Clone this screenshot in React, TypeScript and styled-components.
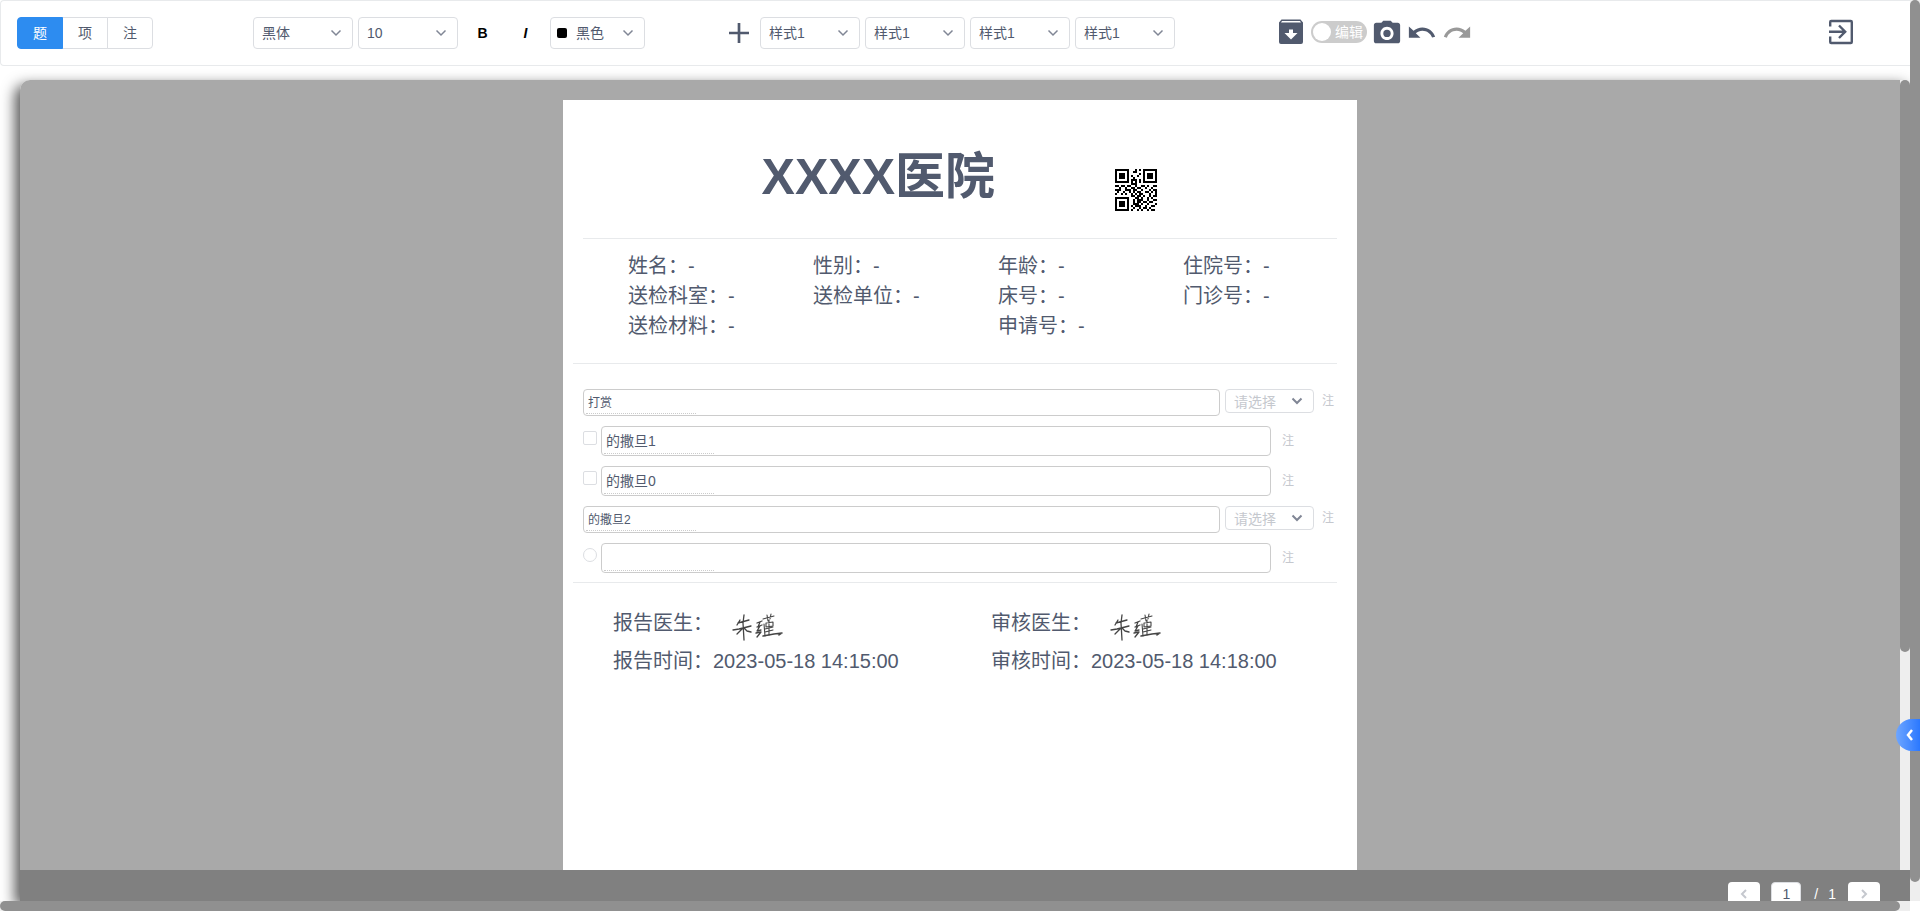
import React from 'react';
import styled, { createGlobalStyle } from 'styled-components';
import { IoMdAdd, IoMdCamera, IoMdUndo, IoMdRedo } from 'react-icons/io';

const ink = '#515a6e';
const line = '#dcdee2';
const divider = '#e8eaec';
const thumb = '#909090';
const muted = '#c5c8ce';

const GlobalStyle = createGlobalStyle`
  * { box-sizing: border-box; }
  body {
    margin: 0;
    background: #fff;
    color: ${ink};
    font: 14px/20px "Liberation Sans", "Noto Sans CJK SC", sans-serif;
  }
  button, input, select { font: inherit; color: inherit; }
`;

const Shell = styled.div`
  display: grid;
  grid-template: minmax(0, 1fr) 10px / minmax(0, 1fr) 10px;
  height: 100vh;
  overflow: hidden;
`;

const Main = styled.main`
  display: flex;
  flex-direction: column;
  min-width: 0;
  overflow: hidden;
`;

const Track = styled.div<{ $across?: boolean; $rest: number }>`
  display: flex;
  flex-direction: ${(p) => (p.$across ? 'row' : 'column')};
  flex: none;
  min-width: 10px;
  background: #eee;
  &::after { content: ''; flex: ${(p) => p.$rest} 0 0; }
`;

const Thumb = styled.div<{ $share: number }>`
  flex: ${(p) => p.$share} 0 0;
  min-width: 10px;
  min-height: 10px;
  border-radius: 5px;
  background: ${thumb};
`;

const Toolbar = styled.header`
  display: flex;
  align-items: center;
  flex: none;
  height: 66px;
  padding: 0 54px 0 16px;
  border: 1px solid ${divider};
  border-right: 0;
  border-radius: 4px 0 0 4px;
`;

const Group = styled.div<{ $gap: number; $before?: number }>`
  display: flex;
  align-items: center;
  gap: ${(p) => p.$gap}px;
  margin-left: ${(p) => p.$before ?? 0}px;
`;

const ActionGroup = styled(Group)`
  padding-bottom: 2px;
`;

const EndGroup = styled(ActionGroup)`
  margin-left: auto;
`;

const Segment = styled.button<{ $active?: boolean }>`
  position: relative;
  z-index: ${(p) => (p.$active ? 1 : 0)};
  width: 46px;
  height: 32px;
  padding: 0;
  margin-left: -1px;
  border: 1px solid ${(p) => (p.$active ? '#2d8cf0' : line)};
  background: ${(p) => (p.$active ? '#2d8cf0' : '#fff')};
  color: ${(p) => (p.$active ? '#fff' : ink)};
  &:first-child { margin-left: 0; border-radius: 4px 0 0 4px; }
  &:last-child { border-radius: 0 4px 4px 0; }
`;

const SelectBox = styled.div<{ $width: number; $height?: number }>`
  position: relative;
  flex: none;
  width: ${(p) => p.$width}px;
  height: ${(p) => p.$height ?? 32}px;
  > svg {
    position: absolute;
    right: 9px;
    top: 50%;
    margin-top: -8px;
    pointer-events: none;
    color: #808695;
  }
`;

const NativeSelect = styled.select<{ $inset?: number; $muted?: boolean }>`
  appearance: none;
  width: 100%;
  height: 100%;
  padding: ${(p) => (p.$muted ? 2 : 0)}px 24px 0 ${(p) => p.$inset ?? 8}px;
  border: 1px solid ${line};
  border-radius: 4px;
  background: #fff;
  color: ${(p) => (p.$muted ? muted : ink)};
  font-size: 14px;
`;

const Swatch = styled.span`
  position: absolute;
  left: 7px;
  top: 11px;
  width: 10px;
  height: 10px;
  border-radius: 2px;
  background: #000;
`;

const StyleButton = styled.button<{ $italic?: boolean }>`
  width: 43px;
  height: 32px;
  padding: 0;
  border: 0;
  background: none;
  color: #000;
  font-weight: 700;
  font-style: ${(p) => (p.$italic ? 'italic' : 'normal')};
`;

const IconButton = styled.button<{ $faded?: boolean }>`
  display: flex;
  padding: 0;
  border: 0;
  background: none;
  color: ${(p) => (p.$faded ? '#999' : ink)};
`;

const Switch = styled.label`
  display: flex;
  align-items: center;
  gap: 4px;
  width: 56px;
  height: 22px;
  padding: 2px;
  border-radius: 11px;
  background: #ccc;
  color: #fff;
  input {
    appearance: none;
    width: 18px;
    height: 18px;
    margin: 0;
    border-radius: 50%;
    background: #fff;
  }
`;

const Editor = styled.section`
  display: flex;
  flex-direction: column;
  flex: 1;
  min-height: 0;
  margin: 14px 0 0 20px;
  border-radius: 10px 0 0 0;
  box-shadow: -5px 5px 14px #555;
`;

const Workspace = styled.div`
  display: flex;
  flex: 1;
  min-height: 0;
`;

const Desk = styled.div`
  display: flex;
  justify-content: center;
  flex: 1;
  min-width: 0;
  padding-top: 20px;
  border-radius: 10px 0 0 0;
  background: #a9a9a9;
  overflow: hidden;
`;

const Paper = styled.article`
  flex: none;
  width: 794px;
  padding: 50px 20px 0;
  background: #fff;
`;

const PaperHead = styled.header`
  display: flex;
  align-items: flex-start;
  justify-content: flex-end;
  gap: 120px;
  height: 89px;
  padding-right: 180px;
  border-bottom: 1px solid ${divider};
  > svg { margin-top: 19px; }
`;

const Title = styled.h1`
  margin: 0;
  font-size: 50px;
  line-height: 54px;
`;

const Patient = styled.dl`
  display: grid;
  grid-template-columns: repeat(4, 185px);
  grid-auto-rows: 30px;
  height: 125px;
  margin: 0 0 0 -10px;
  padding: 12px 0 0 55px;
  border-bottom: 1px solid ${divider};
  font-size: 20px;
  line-height: 30px;
  dt, dd { margin: 0; }
`;

const Cell = styled.div<{ $row: number; $col: number }>`
  display: flex;
  grid-area: ${(p) => p.$row} / ${(p) => p.$col};
`;

const Questions = styled.form`
  display: flex;
  flex-direction: column;
  gap: 10px;
  margin-left: -10px;
  padding: 25px 0 9px 10px;
  border-bottom: 1px solid ${divider};
`;

const Note = styled.button`
  width: 15px;
  padding: 0;
  border: 0;
  background: none;
  color: ${muted};
  font-size: 12px;
  text-align: right;
`;

const QuestionRow = styled.div<{ $option?: boolean }>`
  display: flex;
  align-items: flex-start;
  gap: ${(p) => (p.$option ? 4 : 5)}px;
  padding-right: ${(p) => (p.$option ? 43 : 3)}px;
  font-size: ${(p) => (p.$option ? 14 : 12)}px;
  > ${Note} {
    height: ${(p) => (p.$option ? 30 : 24)}px;
    margin-left: ${(p) => (p.$option ? 4 : 0)}px;
  }
`;

const Frame = styled.div<{ $height: number }>`
  flex: 1;
  height: ${(p) => p.$height}px;
  padding: 2px 2px 1px;
  border: 1px solid #ccc;
  border-radius: 4px;
  input {
    display: block;
    width: 110px;
    height: 100%;
    padding: 0 2px 3px;
    border: 0;
    border-bottom: 1px dotted #ccc;
    background: none;
    outline: 0;
  }
`;

const Tick = styled.input`
  appearance: none;
  width: 14px;
  height: 14px;
  margin: 5px 0 0;
  border: 1px solid ${line};
  border-radius: ${(p) => (p.type === 'radio' ? '50%' : '2px')};
`;

const Signoff = styled.dl`
  display: grid;
  grid-template-columns: repeat(2, 378px);
  grid-auto-rows: 38px;
  margin: 21px 0 0;
  padding-left: 30px;
  font-size: 20px;
  line-height: 38px;
  > div { display: flex; }
  dt, dd { margin: 0; }
  svg { display: block; margin: 9px 0 0 19px; }
`;

const Pager = styled.footer`
  display: flex;
  justify-content: flex-end;
  flex: none;
  height: 31px;
  padding: 12px 30px 0 0;
  background: #808080;
  color: #fff;
  line-height: 24px;
  overflow: hidden;
`;

const PageButton = styled.button`
  display: flex;
  align-items: center;
  justify-content: center;
  width: 32px;
  height: 24px;
  padding: 0;
  border: 0;
  border-radius: 4px;
  background: #fff;
  color: ${muted};
`;

const PageInput = styled.input`
  width: 30px;
  height: 24px;
  margin: 0 13px 0 11px;
  padding: 0;
  border: 1px solid ${line};
  border-radius: 4px;
  color: ${ink};
  text-align: center;
`;

const PageTotal = styled.span`
  display: flex;
  gap: 10px;
  margin-right: 12px;
`;

const DrawerTab = styled.button`
  position: fixed;
  right: 0;
  bottom: 160px;
  display: flex;
  align-items: center;
  justify-content: flex-end;
  width: 24px;
  height: 32px;
  padding: 0 2px 0 0;
  border: 0;
  border-radius: 16px 0 0 16px;
  background: linear-gradient(90deg, #6ea6ff, #2b78ff);
  color: #fff;
`;

function Chevron({ bold }: { bold?: boolean }) {
  return (
    <svg width="16" height="16" viewBox="0 0 16 16" fill="none" stroke="currentColor" strokeWidth={bold ? 2 : 1.5}>
      <path d="M3.5 5.5 8 10l4.5-4.5" />
    </svg>
  );
}

function Arrow({ back, tall }: { back?: boolean; tall?: boolean }) {
  const reach = tall ? 5 : 4;
  const tip = back ? 6 : 10;
  const tail = back ? 10 : 6;
  return (
    <svg width="16" height="16" viewBox="0 0 16 16" fill="none" stroke="currentColor" strokeWidth={tall ? 2.5 : 2}>
      <path d={`M${tail} ${8 - reach}L${tip} 8l${tail - tip} ${reach}`} />
    </svg>
  );
}

function ArchiveIcon() {
  return (
    <svg width="30" height="30" viewBox="0 0 30 30" fill="currentColor">
      <path
        fillRule="evenodd"
        d="M5.5 2.5h19L27 5.5V25a2 2 0 0 1-2 2H5a2 2 0 0 1-2-2V5.500zM6 4 5 5.500h20L24 4zM13 12.500v3.500H8.500L15 22.500 21.500 16H17v-3.500z"
      />
    </svg>
  );
}

function ExitIcon() {
  return (
    <svg width="30" height="30" viewBox="0 0 30 30" fill="none" stroke="currentColor" strokeWidth="2.4">
      <path d="M4.200 9.500V5a1 1 0 0 1 1-1h19.600a1 1 0 0 1 1 1v20a1 1 0 0 1-1 1H5.200a1 1 0 0 1-1-1v-5.500" />
      <path d="M3 14.700h15.500M13 8.500l6.200 6.200L13 21" />
    </svg>
  );
}

interface PickerProps {
  label: string;
  value: string;
  width?: number;
  inset?: number;
  children?: React.ReactNode;
}

function Picker({ label, value, width = 100, inset, children }: PickerProps) {
  return (
    <SelectBox $width={width}>
      <NativeSelect aria-label={label} $inset={inset}>
        <option>{value}</option>
      </NativeSelect>
      {children}
      <Chevron />
    </SelectBox>
  );
}

const qrRows = [
  '111111100010101111111',
  '100000100110001000001',
  '101110100000101011101',
  '101110101001001011101',
  '101110100100001011101',
  '100000101110101000001',
  '111111101010101111111',
  '000000001110000000000',
  '110110110010011010011',
  '001001001101100100100',
  '111001110110010001011',
  '010010010101100110101',
  '100101001010110001001',
  '000000001101101001011',
  '111111100011010010100',
  '100000100101110010011',
  '101110100101101101100',
  '101110100111010010001',
  '101110101011100100110',
  '100000100100101101000',
  '111111101001010010110',
];

function QrCode() {
  const path = qrRows
    .map((row, y) => [...row].map((bit, x) => (bit === '1' ? `M${x} ${y}h1v1h-1z` : '')).join(''))
    .join('');
  return (
    <svg width="42" height="42" viewBox="0 0 21 21" shapeRendering="crispEdges" role="img" aria-label="二维码">
      <path d={path} fill="#000" />
    </svg>
  );
}

function Signature() {
  return (
    <svg width="52" height="28" viewBox="0 0 52 28" fill="none" stroke="#444" strokeLinecap="round" strokeLinejoin="round">
      <path strokeWidth="1.3" d="M8 7 5 12M6 10l11-3M1 17l6-1 12-3M12 2l-1 8 1 17M11 15l-6 6M12 15l3 3 4 1" />
      <path strokeWidth="1.3" d="M25 10l5-2M28 9l-2 5M25 14l5-2M28 13l-3 5 4-1M24 20l5-1-4 5" />
      <path strokeWidth="1.1" d="M31 6l11-3M35 2l1 6M39 1l-1 5M34 10l7-1v4l-7 1zM37 7v15M33 16l8-2M33 19l8-2M32 11l1 12" />
      <path strokeWidth="1.5" d="M31 23l11-2 8-1-3 2" />
    </svg>
  );
}

const patient: [string, string, number, number][] = [
  ['姓名：', '-', 1, 1],
  ['性别：', '-', 1, 2],
  ['年龄：', '-', 1, 3],
  ['住院号：', '-', 1, 4],
  ['送检科室：', '-', 2, 1],
  ['送检单位：', '-', 2, 2],
  ['床号：', '-', 2, 3],
  ['门诊号：', '-', 2, 4],
  ['送检材料：', '-', 3, 1],
  ['申请号：', '-', 3, 3],
];

function Question({ text }: { text: string }) {
  return (
    <QuestionRow>
      <Frame $height={27}>
        <input aria-label="题目" defaultValue={text} />
      </Frame>
      <SelectBox $width={89} $height={24}>
        <NativeSelect aria-label="题目选项" $muted>
          <option>请选择</option>
        </NativeSelect>
        <Chevron bold />
      </SelectBox>
      <Note type="button">注</Note>
    </QuestionRow>
  );
}

function Option({ text, kind }: { text: string; kind: 'checkbox' | 'radio' }) {
  return (
    <QuestionRow $option>
      <Tick type={kind} aria-label={text || '选项'} />
      <Frame $height={30}>
        <input aria-label="选项内容" defaultValue={text} />
      </Frame>
      <Note type="button">注</Note>
    </QuestionRow>
  );
}

export default function App() {
  return (
    <>
      <GlobalStyle />
      <Shell>
        <Main>
          <Toolbar>
            <Group $gap={0}>
              <Segment $active>题</Segment>
              <Segment>项</Segment>
              <Segment>注</Segment>
            </Group>
            <Group $gap={5} $before={100}>
              <Picker label="字体" value="黑体" />
              <Picker label="字号" value="10" />
            </Group>
            <Group $gap={0} $before={3}>
              <StyleButton aria-label="加粗">B</StyleButton>
              <StyleButton aria-label="斜体" $italic>I</StyleButton>
            </Group>
            <Group $gap={0} $before={3}>
              <Picker label="颜色" value="黑色" width={95} inset={25}>
                <Swatch />
              </Picker>
            </Group>
            <Group $gap={5} $before={78}>
              <IconButton aria-label="添加"><IoMdAdd size={32} /></IconButton>
              <Picker label="样式一" value="样式1" />
              <Picker label="样式二" value="样式1" />
              <Picker label="样式三" value="样式1" />
              <Picker label="样式四" value="样式1" />
            </Group>
            <ActionGroup $gap={5} $before={101}>
              <IconButton aria-label="保存"><ArchiveIcon /></IconButton>
              <Switch>
                <input type="checkbox" role="switch" />
                编辑
              </Switch>
              <IconButton aria-label="拍照"><IoMdCamera size={30} /></IconButton>
              <IconButton aria-label="撤销"><IoMdUndo size={30} /></IconButton>
              <IconButton aria-label="重做" $faded><IoMdRedo size={30} /></IconButton>
            </ActionGroup>
            <EndGroup $gap={0}>
              <IconButton aria-label="退出"><ExitIcon /></IconButton>
            </EndGroup>
          </Toolbar>

          <Editor>
            <Workspace>
              <Desk>
                <Paper>
                  <PaperHead>
                    <Title>XXXX医院</Title>
                    <QrCode />
                  </PaperHead>
                  <Patient>
                    {patient.map(([label, value, row, col]) => (
                      <Cell key={label} $row={row} $col={col}>
                        <dt>{label}</dt>
                        <dd>{value}</dd>
                      </Cell>
                    ))}
                  </Patient>
                  <Questions>
                    <Question text="打赏" />
                    <Option kind="checkbox" text="的撒旦1" />
                    <Option kind="checkbox" text="的撒旦0" />
                    <Question text="的撒旦2" />
                    <Option kind="radio" text="" />
                  </Questions>
                  <Signoff>
                    <div><dt>报告医生：</dt><dd><Signature /></dd></div>
                    <div><dt>审核医生：</dt><dd><Signature /></dd></div>
                    <div><dt>报告时间：</dt><dd>2023-05-18 14:15:00</dd></div>
                    <div><dt>审核时间：</dt><dd>2023-05-18 14:18:00</dd></div>
                  </Signoff>
                </Paper>
              </Desk>
              <Track $rest={218}><Thumb $share={572} /></Track>
            </Workspace>
            <Pager>
              <PageButton aria-label="上一页"><Arrow back /></PageButton>
              <PageInput aria-label="页码" defaultValue="1" />
              <PageTotal><span>/</span><span>1</span></PageTotal>
              <PageButton aria-label="下一页"><Arrow /></PageButton>
            </Pager>
          </Editor>
        </Main>
        <Track $rest={19}><Thumb $share={882} /></Track>
        <Track $across $rest={10}><Thumb $share={1900} /></Track>
      </Shell>
      <DrawerTab aria-label="展开侧栏"><Arrow back tall /></DrawerTab>
    </>
  );
}
